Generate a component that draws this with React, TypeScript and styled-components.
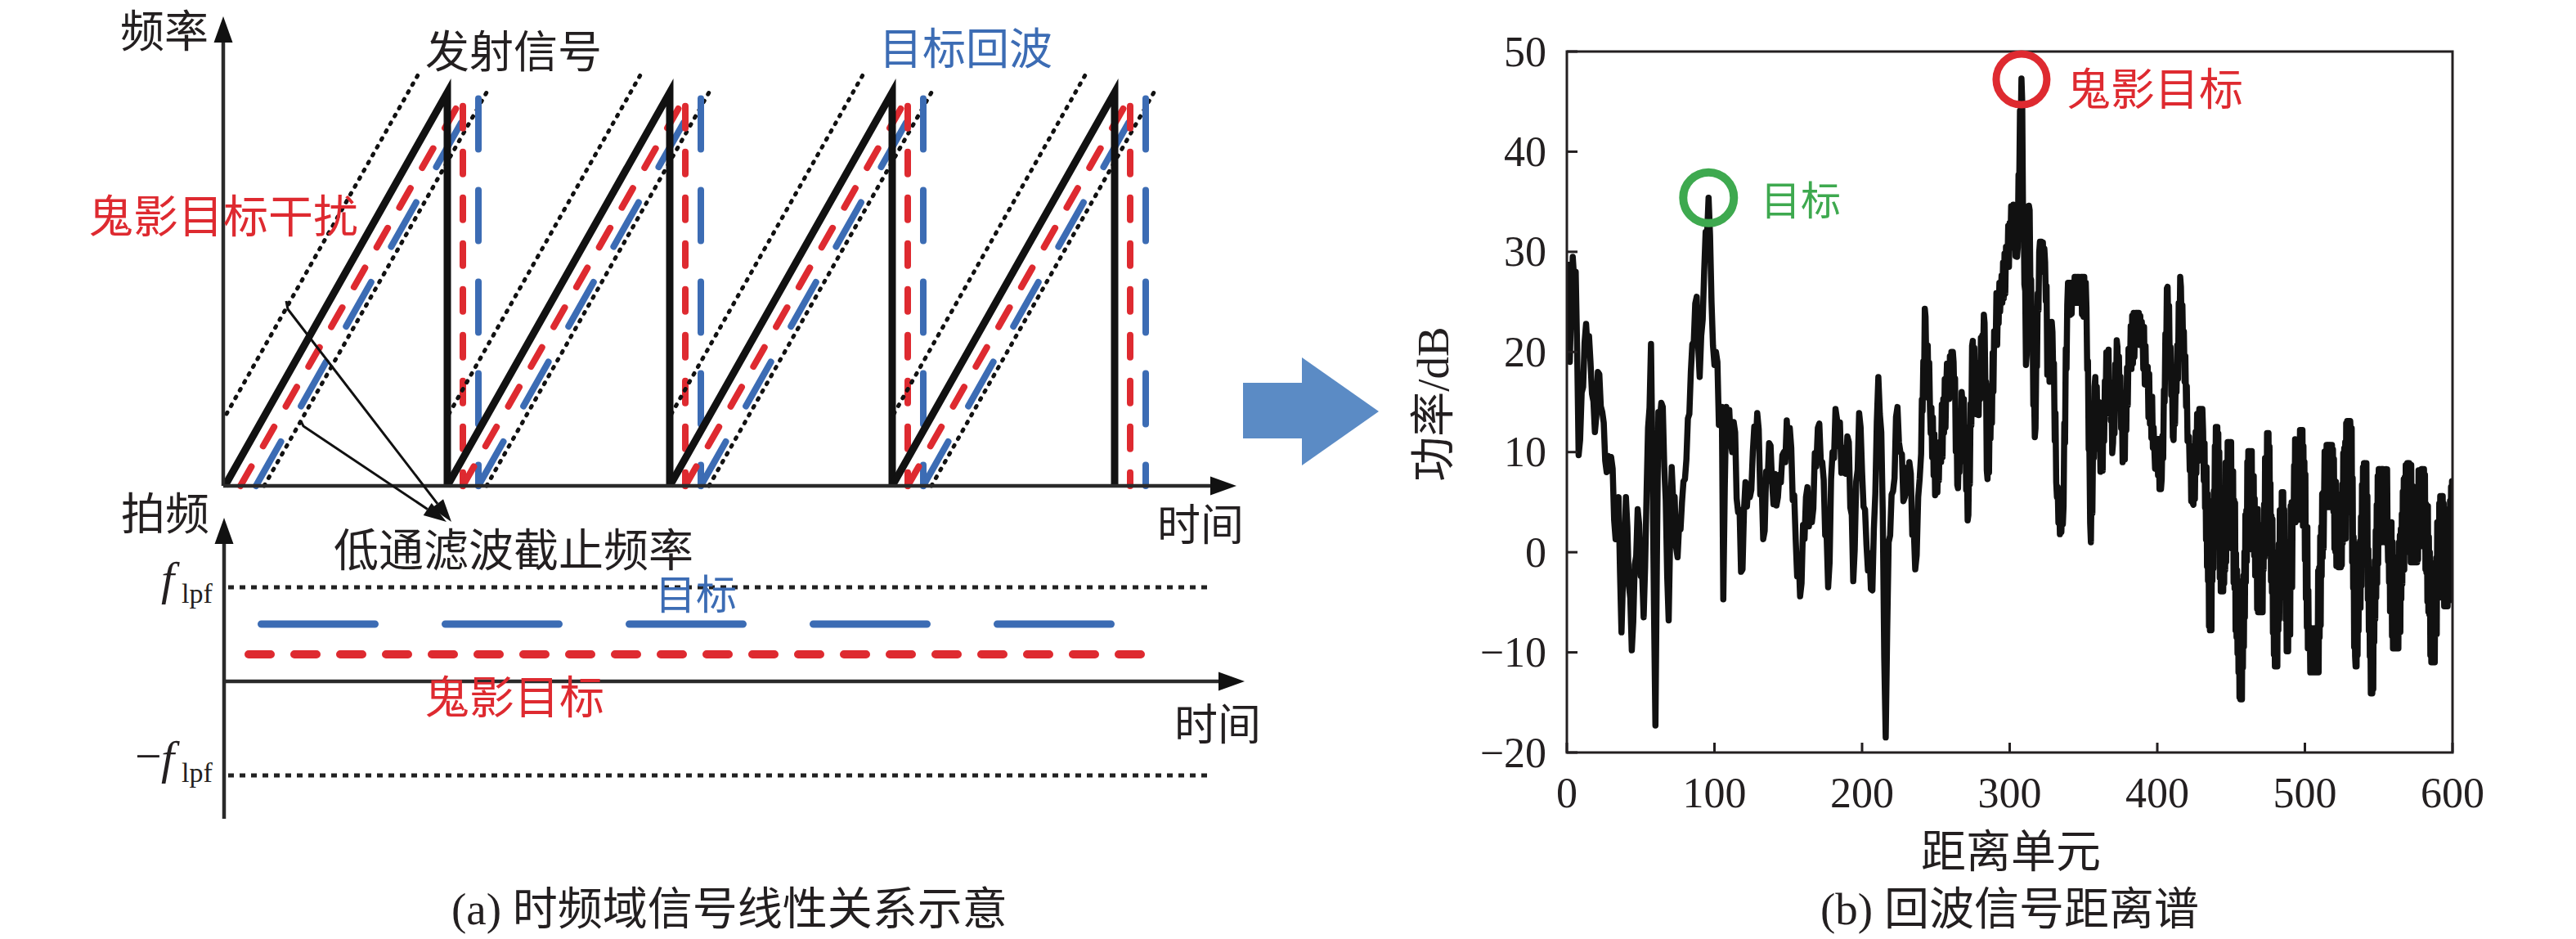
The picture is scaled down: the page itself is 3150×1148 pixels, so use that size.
import React, { useMemo } from "react";
import styled, { createGlobalStyle } from "styled-components";

const INK = "#231f20";
const RED = "#de2a30";
const BLUE = "#3c6cb4";
const GREEN = "#3ea94f";
const ARROW = "#5b8bc5";
const CJK = `"Noto Sans CJK SC", sans-serif`;
const SERIF = `"Liberation Serif", "Noto Sans CJK SC", serif`;

const GlobalStyle = createGlobalStyle`
  html, body { margin: 0; padding: 0; background: #fff; }
  body { font-family: ${SERIF}; color: ${INK}; }
`;

const Page = styled.main`
  display: flex;
  width: 3150px;
  height: 1148px;
  overflow: hidden;
  background: #fff;
`;

const Panel = styled.section<{ $width: number }>`
  display: flex;
  flex-direction: column;
  flex: 0 0 ${(p) => p.$width}px;
`;

const Drawing = styled.svg`
  display: block;
  overflow: visible;
`;

const Caption = styled.p<{ $indent: number }>`
  margin: 0;
  padding-left: ${(p) => p.$indent}px;
  font-family: ${SERIF};
  font-size: 55px;
  line-height: 70px;
  color: ${INK};
  white-space: nowrap;
`;

const ArrowSlot = styled.div`
  flex: 0 0 180px;
  padding-top: 437px;
`;

const Label = styled.text<{ $size: number; $color?: string; $serif?: boolean }>`
  font-family: ${(p) => (p.$serif ? SERIF : CJK)};
  font-size: ${(p) => p.$size}px;
  fill: ${(p) => p.$color ?? INK};
`;

// arrow head triangle at (x2,y2) pointing along (x1,y1)->(x2,y2)
const head = (x1: number, y1: number, x2: number, y2: number, len: number, half: number) => {
  const dx = x2 - x1;
  const dy = y2 - y1;
  const l = Math.hypot(dx, dy);
  const ux = dx / l;
  const uy = dy / l;
  const bx = x2 - ux * len;
  const by = y2 - uy * len;
  return {
    points: `${x2},${y2} ${bx - uy * half},${by + ux * half} ${bx + uy * half},${by - ux * half}`,
    bx,
    by,
  };
};

const Pointer = ({ from, to }: { from: [number, number][]; to: [number, number] }) => {
  const last = from[from.length - 1];
  const h = head(last[0], last[1], to[0], to[1], 28, 9);
  const pts = [...from, [h.bx, h.by]].map((p) => p.join(",")).join(" ");
  return (
    <g>
      <polyline points={pts} fill="none" stroke="#111" strokeWidth={3} />
      <polygon points={h.points} fill="#111" />
    </g>
  );
};

const Axis = ({ x1, y1, x2, y2 }: { x1: number; y1: number; x2: number; y2: number }) => {
  const h = head(x1, y1, x2, y2, 32, 11.5);
  return (
    <g>
      <line x1={x1} y1={y1} x2={h.bx} y2={h.by} stroke="#2a2a2a" strokeWidth={4.5} />
      <polygon points={h.points} fill="#111" />
    </g>
  );
};

const SLOPE = 272 / 481;

const Sawtooth = ({ k }: { k: number }) => {
  const x0 = 273 + 272 * k;
  const xt = x0 + 274;
  const dot = { stroke: "#111", strokeWidth: 5, strokeDasharray: "2 9", strokeLinecap: "round" as const };
  return (
    <g fill="none">
      <line x1={x0 + 4} y1={506} x2={x0 - 46 + (594 - 87) * SLOPE} y2={87} {...dot} />
      <line x1={x0 + 50} y1={594} x2={x0 + 50 + (594 - 108) * SLOPE} y2={108} {...dot} />
      <polyline
        points={`${x0 + 40},594 ${xt + 38},113 ${xt + 38},594`}
        stroke={BLUE}
        strokeWidth={8}
        strokeDasharray="62 50"
        strokeLinecap="round"
      />
      <polyline
        points={`${x0 + 21},594 ${xt + 19},118 ${xt + 19},594`}
        stroke={RED}
        strokeWidth={8}
        strokeDasharray="27 29"
        strokeLinecap="round"
      />
      <polyline points={`${x0 + 2},594 ${xt},113 ${xt},594`} stroke="#111" strokeWidth={9} />
    </g>
  );
};

const Flpf = ({ y, minus }: { y: number; minus?: boolean }) => (
  <g>
    {minus && (
      <Label $serif $size={58} x={165} y={y - 2}>
        −
      </Label>
    )}
    <Label $serif $size={58} x={197} y={y} fontStyle="italic">
      f
    </Label>
    <Label $serif $size={34} x={222} y={y + 10}>
      lpf
    </Label>
  </g>
);

const TimeFrequency = () => (
  <Drawing width={1520} height={1077} viewBox="0 0 1520 1077">
    {[0, 1, 2, 3].map((k) => (
      <Sawtooth key={k} k={k} />
    ))}
    <Axis x1={273} y1={594} x2={273} y2={20} />
    <Axis x1={273} y1={594} x2={1512} y2={594} />
    <Pointer from={[[350, 368], [352, 378]]} to={[552, 638]} />
    <Pointer from={[[368, 515], [371, 521]]} to={[546, 638]} />

    <Label $size={54} x={201} y={34} textAnchor="middle" dominantBaseline="central">频率</Label>
    <Label $size={54} x={628} y={59} textAnchor="middle" dominantBaseline="central">发射信号</Label>
    <Label $size={53} $color={BLUE} x={1181} y={56} textAnchor="middle" dominantBaseline="central">目标回波</Label>
    <Label $size={55} $color={RED} x={273} y={260} textAnchor="middle" dominantBaseline="central">鬼影目标干扰</Label>
    <Label $size={53} x={1468} y={638} textAnchor="middle" dominantBaseline="central">时间</Label>

    {/* beat frequency plot */}
    <Axis x1={274} y1={1001} x2={274} y2={633} />
    <Axis x1={274} y1={833} x2={1522} y2={833} />
    <line x1={279} y1={718} x2={1481} y2={718} stroke="#222" strokeWidth={5} strokeDasharray="7 7" />
    <line x1={279} y1={948} x2={1482} y2={948} stroke="#222" strokeWidth={5} strokeDasharray="7 7" />
    <line x1={319.5} y1={763} x2={1362} y2={763} stroke={BLUE} strokeWidth={9} strokeDasharray="139 86" strokeLinecap="round" />
    <line x1={304} y1={800} x2={1401} y2={800} stroke={RED} strokeWidth={10} strokeDasharray="27 29" strokeLinecap="round" />

    <Label $size={54} x={202} y={624} textAnchor="middle" dominantBaseline="central">拍频</Label>
    <Label $size={55} x={628} y={668} textAnchor="middle" dominantBaseline="central">低通滤波截止频率</Label>
    <Label $size={50} $color={BLUE} x={851} y={723} textAnchor="middle" dominantBaseline="central">目标</Label>
    <Label $size={55} $color={RED} x={629} y={848} textAnchor="middle" dominantBaseline="central">鬼影目标</Label>
    <Label $size={53} x={1489} y={882} textAnchor="middle" dominantBaseline="central">时间</Label>
    <Flpf y={727} />
    <Flpf y={946} minus />
  </Drawing>
);

const KEYS: [number, number][] = [
  [0, 29], [2, 19], [4, 29.5], [6, 28], [8, 9.7], [13, 22.8], [16, 19], [19, 12], [21, 18], [24, 14],
  [27, 8], [30, 9.5], [33, 1.3], [35, 5.5], [37, -8], [40, 5.5], [44, -9.8], [48, 4.3], [52, -6.5],
  [54, 6], [57, 20.8], [60, -17.3], [62, 14], [65, 14.5], [69, -6.8], [71, 8.5], [75, -0.5], [78, 5],
  [80, 7.3], [84, 18], [88, 25.5], [90, 17.5], [93, 28], [96, 35.4], [98, 25], [100, 18.7], [102, 19],
  [103, 12.7], [105, 14.5], [106, -4.7], [108, 14.5], [111, 11], [113, 13], [116, 4], [119, -1.7],
  [121, 7], [124, 5.5], [126, 10], [129, 13.9], [133, 1.3], [137, 10.9], [139, 7], [143, 5.5], [147, 10],
  [151, 12.4], [155, 1.3], [158, -4.4], [162, 5.5], [166, 3], [170, 12.4], [173, 9], [177, -3.5],
  [180, 10], [183, 13.3], [188, 7.9], [191, 11], [194, -2.9], [198, 13.9], [200, 8], [203, 0.7],
  [207, -3.8], [211, 17.5], [213, 12], [216, -18.5], [218, 1], [221, 6.1], [224, 14.5], [226, 10],
  [229, 5.5], [232, 9], [236, -1.7], [239, 7.3], [243, 23.5], [244, 20], [246, 14.5], [250, 6.7],
  [253, 10], [257, 16.3], [262, 19], [265, 6.4], [268, 15], [272, 3.7], [275, 21.1], [278, 14],
  [283, 22.9], [285, 7.3], [290, 21.7], [294, 25.9], [298, 29.5], [302, 33.7], [305, 29.5], [308, 47.3],
  [311, 18.7], [313, 34.6], [317, 11.5], [320, 30], [324, 29], [326, 18], [329, 22], [332, 5.5],
  [336, 2.8], [339, 24.7], [343, 25.9], [348, 26.5], [352, 24.4], [355, 1], [358, 17.5], [362, 8.5],
  [366, 19.9], [370, 10.9], [373, 20.5], [377, 9.7], [381, 19.3], [385, 22.9], [390, 21.7], [393, 17.5],
  [398, 10.3], [403, 7.3], [407, 26.5], [411, 11.2], [416, 26.5], [421, 11.5], [424, 4.9], [428, 13.3],
  [431, 12.1], [436, -6.8], [440, 11.5], [444, -2.9], [449, 10], [457, -13.7], [462, 9.1], [470, -5],
  [475, 10.9], [480, -10.4], [485, 5], [488, -8.9], [492, 4], [498, 11.2], [503, -8.6], [508, -11],
  [513, 5.5], [518, 9.7], [523, -0.5], [531, 12.1], [534, -10.4], [541, 7.9], [545, -13.1], [551, 7.3],
  [556, 2], [562, -8.6], [569, 7.9], [574, 0], [580, 7.3], [587, -10], [592, 4.6], [596, -4.4], [600, 6.1],
];

const mulberry = (seed: number) => () => {
  seed = (seed + 0x6d2b79f5) | 0;
  let t = Math.imul(seed ^ (seed >>> 15), 1 | seed);
  t = (t + Math.imul(t ^ (t >>> 7), 61 | t)) ^ t;
  return ((t ^ (t >>> 14)) >>> 0) / 4294967296;
};

// noise level and sample density of the trace per range bin
const jitter = (i: number) => (i > 432 ? 6 : i > 240 ? 3.2 : i > 100 ? 2.2 : 1.6);
const steps = (i: number) => (i >= 432 ? 3 : i >= 240 ? 2 : 1);

const spectrum = () => {
  const rand = mulberry(7);
  const fixed = new Map(KEYS);
  const out: [number, number][] = [];
  let j = 0;
  let n = 0;
  for (let i = 0; i <= 600; i++) {
    const s = i === 600 ? 1 : steps(i);
    for (let q = 0; q < s; q++) {
      const t = i + q / s;
      while (KEYS[j + 1] && KEYS[j + 1][0] < t) j++;
      if (q === 0 && fixed.has(i)) {
        out.push([t, fixed.get(i)!]);
        continue;
      }
      const [a, va] = KEYS[j];
      const [b, vb] = KEYS[j + 1] ?? KEYS[j];
      const base = b === a ? va : va + ((vb - va) * (t - a)) / (b - a);
      const sign = n++ % 2 ? 1 : -1;
      const v = base + sign * (0.35 + 0.65 * rand()) * jitter(i);
      const lo = Math.min(va, vb) - 1;
      const hi = Math.max(va, vb) + 1;
      out.push([t, Math.max(lo, Math.min(hi, v))]);
    }
  }
  return out;
};

const BOX = { l: 216, r: 1299, t: 63, b: 920 };
const sx = (i: number) => BOX.l + (i * (BOX.r - BOX.l)) / 600;
const sy = (v: number) => BOX.t + ((50 - v) * (BOX.b - BOX.t)) / 70;

const RangeSpectrum = () => {
  const path = useMemo(
    () => spectrum().map(([t, v], k) => `${k ? "L" : "M"}${sx(t).toFixed(1)},${sy(v).toFixed(1)}`).join(""),
    []
  );
  const yTicks = [50, 40, 30, 20, 10, 0, -10, -20];
  const xTicks = [0, 100, 200, 300, 400, 500, 600];
  return (
    <Drawing width={1450} height={1077} viewBox="0 0 1450 1077">
      <defs>
        <clipPath id="plotArea">
          <rect x={BOX.l} y={BOX.t} width={BOX.r - BOX.l} height={BOX.b - BOX.t} />
        </clipPath>
      </defs>
      <path d={path} fill="none" stroke="#111" strokeWidth={7.5} strokeLinejoin="round" clipPath="url(#plotArea)" />
      <rect x={BOX.l} y={BOX.t} width={BOX.r - BOX.l} height={BOX.b - BOX.t} fill="none" stroke="#231f20" strokeWidth={3} />
      {yTicks.map((v) => (
        <g key={v}>
          <line x1={BOX.l} x2={BOX.l + 13} y1={sy(v)} y2={sy(v)} stroke="#231f20" strokeWidth={3} />
          <Label $serif $size={52} x={191} y={sy(v)} textAnchor="end" dominantBaseline="central">
            {v < 0 ? `−${-v}` : v}
          </Label>
        </g>
      ))}
      {xTicks.map((i) => (
        <g key={i}>
          <line x1={sx(i)} x2={sx(i)} y1={BOX.b} y2={BOX.b - 12} stroke="#231f20" strokeWidth={3} />
          <Label $serif $size={52} x={sx(i)} y={969} textAnchor="middle" dominantBaseline="central">
            {i}
          </Label>
        </g>
      ))}
      <Label $serif $size={55} transform="translate(52,494) rotate(-90)" textAnchor="middle" dominantBaseline="central">
        功率/dB
      </Label>
      <Label $size={55} x={759} y={1036} textAnchor="middle" dominantBaseline="central">距离单元</Label>

      <circle cx={sx(96)} cy={sy(35.4)} r={31} fill="none" stroke={GREEN} strokeWidth={10} />
      <Label $size={49} $color={GREEN} x={502} y={241} textAnchor="middle" dominantBaseline="central">目标</Label>
      <circle cx={sx(308)} cy={sy(47.3) + 1} r={31} fill="none" stroke={RED} strokeWidth={9} />
      <Label $size={54} $color={RED} x={935} y={105} textAnchor="middle" dominantBaseline="central">鬼影目标</Label>
    </Drawing>
  );
};

const FlowArrow = () => (
  <svg width={166} height={132} viewBox="0 0 166 132" style={{ display: "block" }}>
    <rect x={0} y={31} width={73} height={68} fill={ARROW} />
    <polygon points="72,0 166,66 72,132" fill={ARROW} />
  </svg>
);

export default function App() {
  return (
    <>
      <GlobalStyle />
      <Page>
        <Panel $width={1520}>
          <TimeFrequency />
          <Caption $indent={552}>(a) 时频域信号线性关系示意</Caption>
        </Panel>
        <ArrowSlot>
          <FlowArrow />
        </ArrowSlot>
        <Panel $width={1450}>
          <RangeSpectrum />
          <Caption $indent={526}>(b) 回波信号距离谱</Caption>
        </Panel>
      </Page>
    </>
  );
}
